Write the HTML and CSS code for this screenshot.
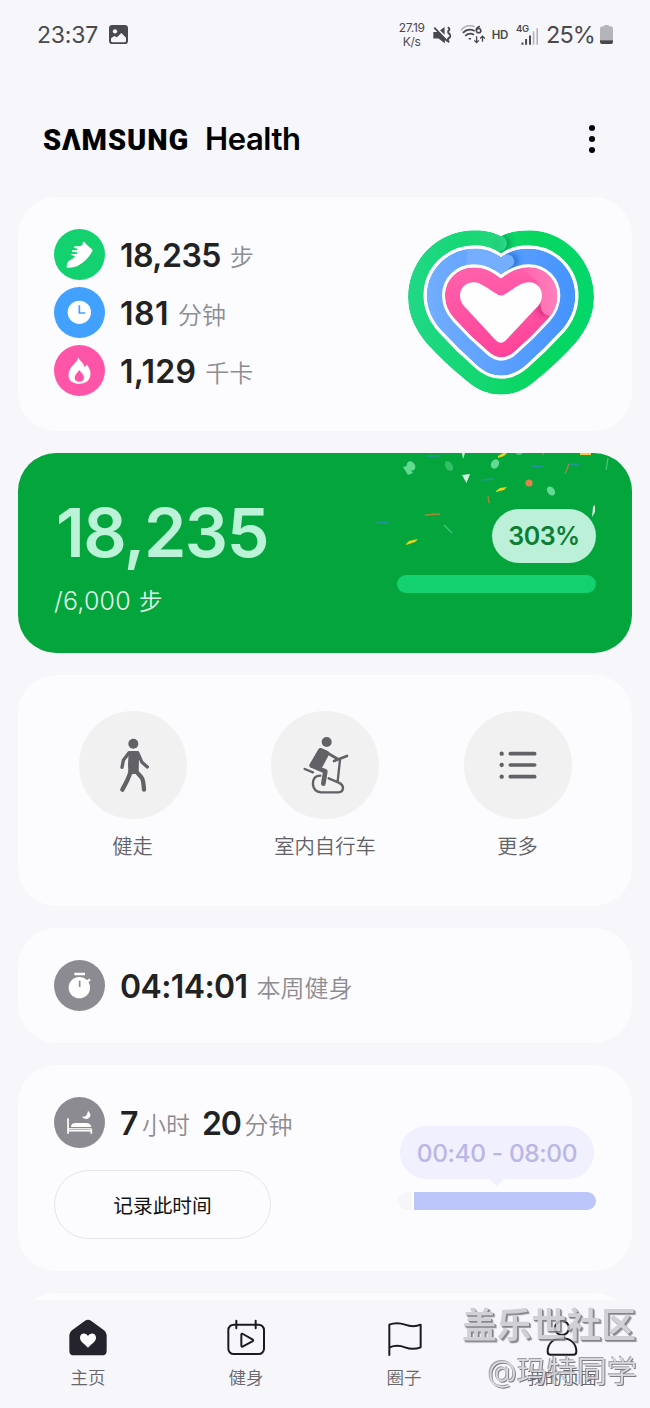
FILE: index.html
```html
<!DOCTYPE html>
<html lang="zh-CN">
<head>
<meta charset="utf-8">
<title>Samsung Health</title>
<link rel="stylesheet" href="styles.css">
</head>
<body>
<div class="screen">
  <header class="status">
    <div class="status-left">
      <span class="clock">23:37</span>
      <svg class="photo" viewBox="0 0 57 57"><rect width="57" height="57" rx="10" fill="#4a4a4e"/><circle cx="18" cy="19" r="6.500" fill="#f6f6fb"/><path d="M6 40l10-7 8 4 13-13 14 14v9q0 5-5 5H11q-5 0-5-5z" fill="#f6f6fb"/></svg>
    </div>
    <div class="status-right">
      <span class="speed">27.19<br>K/s</span>
      <svg class="mute" viewBox="0 0 56 54" fill="#48484c"><path d="M1 18h14l22 22v13L17 38H1zM22 12l14-10v24zM6 2l41 43-4 4L2 6z"/><path d="M46 3q8 5 3 10t2 11-1 12 0 14" fill="none" stroke="#48484c" stroke-width="6"/></svg>
      <svg class="wifi" viewBox="0 0 78 58" fill="none" stroke="#48484c" stroke-width="5"><path d="M2 16Q20-5 44 5" stroke="#b5b5b9"/><path d="M8 24q16-16 36-6M15 33q14-12 27-3M26 42h7"/><path d="M50 34v19m-7-6 7 7 7-7M68 51V34m-7 7 7-7 7 7" stroke-width="4"/><path d="M60 4q-12 4-11 13c2 10 15 8 14 0-1-7-9-9-14-1" stroke-width="5"/></svg>
      <span class="hd">HD</span>
      <div class="cell"><span class="net">4G</span><svg viewBox="0 0 54 52"><path d="M4 51v-7M15 51V34M27 51V23" stroke="#48484c" stroke-width="6"/><path d="M38 51V10M49 51V1" stroke="#b5b5b9" stroke-width="5"/></svg></div>
      <span class="percent">25%</span>
      <svg class="battery" viewBox="0 0 39 57"><path d="M13 0h13v4h5q8 0 8 8v34H0V12q0-8 8-8h5z" fill="#b5b5b9"/><path d="M0 46h39v5q0 6-6 6H6q-6 0-6-6z" fill="#48484c"/></svg>
    </div>
  </header>

  <div class="appbar">
    <h1 class="brand"><span class="maker" aria-label="SAMSUNG">SΛMSUNG</span><span class="product">Health</span></h1>
    <button class="menu" aria-label="更多选项"><i></i><i></i><i></i></button>
  </div>

  <main class="cards">
    <section class="card daily">
      <div class="metrics">
        <div class="row">
          <svg class="badge" viewBox="0 0 153 153"><circle cx="76.500" cy="76.500" r="76.500" fill="#12d16e"/><path d="M87 39q2-2 4 0l8 9 15 13q3 3 1 6-8 14-19 25-12 12-27 20-14 5-28 4-4 0-3-4 0-10 6-16l14-8q4-4 5-8l-10-1q-2-3 1-4h14l3-5-16-1q-3-3 0-5h14l2-5-10-2q-2-3 1-5h13q9 0 11-6z" fill="#fff"/></svg>
          <b class="value">18,235</b><span class="unit">步</span>
        </div>
        <div class="row">
          <svg class="badge" viewBox="0 0 153 153"><circle cx="76.500" cy="76.500" r="76.500" fill="#42a1ff"/><circle cx="76" cy="76" r="35" fill="#fff"/><path d="M76 55v23h18" fill="none" stroke="#42a1ff" stroke-width="5"/></svg>
          <b class="value minutes">181</b><span class="unit">分钟</span>
        </div>
        <div class="row">
          <svg class="badge" viewBox="0 0 153 153"><circle cx="76.500" cy="76.500" r="76.500" fill="#ff55a8"/><path d="M73 38c4 9 15 13 18 27 5-1 5-4 7-6 20 20 15 57-22 57-36 0-39-31-23-51 8-9 16-17 20-27z" fill="#fff"/><path d="M76 75c8 10 14 15 14 24 0 7-6 11-14 11s-14-4-14-11c0-9 7-14 14-24z" fill="#ff55a8"/></svg>
          <b class="value kcal">1,129</b><span class="unit">千卡</span>
        </div>
      </div>
      <svg class="heart" viewBox="39 44 558 494">
        <defs>
          <linearGradient id="green"><stop offset="0" stop-color="#21d886"/><stop offset=".7" stop-color="#08d65f"/><stop offset="1" stop-color="#04d66b"/></linearGradient>
          <linearGradient id="blue"><stop offset="0" stop-color="#72adff"/><stop offset="1" stop-color="#4593ff"/></linearGradient>
          <linearGradient id="pink" x1="0" y1="0" x2=".2" y2="1"><stop offset="0" stop-color="#ff62ad"/><stop offset="1" stop-color="#ff459b"/></linearGradient>
          <linearGradient id="pinktip" x1="0" x2="1"><stop offset="0" stop-color="#ff62ad"/><stop offset="1" stop-color="#ff80bc"/></linearGradient>
          <linearGradient id="greentip" x1="0" x2="1"><stop offset="0" stop-color="#2bd986" stop-opacity="0"/><stop offset="1" stop-color="#2bd986"/></linearGradient>
          <filter id="shade" x="-60%" y="-60%" width="220%" height="220%"><feGaussianBlur stdDeviation="9"/></filter>
          <clipPath id="g"><path id="gp" d="M318 62C292 48 266 44 240 44C125 44 39 135 39 245C39 299 62 343 92 380Q145 440 216 497C279 551 358 551 420 497Q491 440 544 380C574 343 597 299 597 245C597 135 510 44 400 44C370 44 342 49 318 62Z"/></clipPath>
          <clipPath id="b"><path id="bp" d="M318 125C293 107 267 99 240 99C158 99 95 163 95 240C95 281 112 314 137 343Q190 401 245 449C291 491 346 491 393 449Q448 401 501 343C526 314 541 281 541 240C541 163 479 99 399 99C368 99 342 107 318 125Z"/></clipPath>
          <clipPath id="p"><path id="pp" d="M318 188C289 166 267 155 236 155C188 155 150 193 150 240C150 267 160 289 180 311Q226 362 276 405C305 433 334 433 363 405Q412 362 458 311C478 289 487 267 487 240C487 193 450 155 401 155C370 155 347 166 318 188Z"/></clipPath>
        </defs>
        <g clip-path="url(#g)"><use href="#gp" fill="url(#green)"/><circle cx="320" cy="84" r="25" fill="#007d42" opacity=".65" filter="url(#shade)"/><path d="M200 40Q275 42 318 61A23 23 0 0 1 306 107Q270 90 200 91Z" fill="url(#greentip)"/></g>
        <use href="#bp" fill="#fff" stroke="#fff" stroke-width="19"/>
        <g clip-path="url(#b)"><use href="#bp" fill="url(#blue)"/><circle cx="347" cy="136" r="24" fill="#175bbb" opacity=".65" filter="url(#shade)"/><path d="M215 99Q275 93 319 126L326 119Q353 112 358 135Q358 150 344 157L318 180L290 155L215 145Z" fill="#75aeff"/></g>
        <use href="#pp" fill="#fff" stroke="#fff" stroke-width="18"/>
        <g clip-path="url(#p)"><use href="#pp" fill="url(#pink)"/><circle cx="449" cy="278" r="24" fill="#bd1c67" opacity=".6" filter="url(#shade)"/><path d="M370 150H490V270A25 25 0 0 1 438 278L430 200Z" fill="url(#pinktip)"/></g>
        <path d="M318 240C326 240 331 235 370 210C382 203 392 200 403 200C425 200 441 218 441 239C441 255 434 267 424 277L337 370C323 386 312 386 298 370L212 277C202 266 195 255 195 239C195 217 213 200 236 200C248 200 260 206 270 213C307 236 310 240 318 240Z" fill="#fefeff"/>
      </svg>
    </section>

    <section class="card steps">
      <svg class="confetti" viewBox="0 0 280 100">
        <g fill="#62da91"><ellipse cx="41" cy="13" rx="4" ry="5" transform="rotate(-35 41 13)"/><path d="M33 14l4-1 6 7-5 2z"/><ellipse cx="79" cy="13" rx="3.500" ry="5.500" transform="rotate(-30 79 13)" opacity=".5"/><ellipse cx="125" cy="11" rx="3.800" ry="5" transform="rotate(35 125 11)"/><ellipse cx="181" cy="38" rx="3.600" ry="5" transform="rotate(-35 181 38)"/><path d="M145 0h8q-4 4-8 0z" opacity=".7"/></g>
        <path d="M92 22l8-1-3.500 9zM92 0h3l-2 6zM223 54l2-2v7l-3 5z" fill="#d5f3df"/>
        <g fill="#e9d31d"><path d="M128 3l5-3h4l-3 3-6 2zM126 38l4-3 7-1-3 3-8 2zM36 91l3-3 9-2-3 3-9 3z"/><path d="M210 0h11v2h-11z" fill="#fbcb30"/></g>
        <circle cx="159" cy="30" r="3.600" fill="#e4824b"/>
        <g fill="none" stroke="#2295a0" stroke-width="1.300"><path d="M57 3h13M112 27l12-1M161 13l12 1M197 11l12 1M6 69l13 1"/><path d="M118 43l1 7M199 11l-4 10M55 62l15-1M173 0v2" stroke="#a58a35"/><path d="M74 72l8 8M238 5l-2 12" stroke="#4bc47a"/></g>
      </svg>
      <div class="steps-left"><strong class="big">18,235</strong><span class="goal">/6,000 <i>步</i></span></div>
      <div class="steps-right"><span class="pill">303%</span><div class="bar"></div></div>
    </section>

    <section class="card shortcuts">
      <div class="shortcut"><div class="round"><svg viewBox="0 0 324 324" fill="none" stroke="#626166" stroke-linecap="round" stroke-linejoin="round"><circle cx="163" cy="98" r="15" fill="#626166" stroke="none"/><path d="M155 126h16l3 20-1 36-19 2-1-25z" fill="#626166" stroke-width="12"/><path d="M150 125l-17 23-4 21M176 125l13 29 16 14" stroke-width="10"/><path d="M154 184q-5 18-24 52M174 184l14 16q5 5 7 36" stroke-width="13"/></svg></div><span>健走</span></div>
      <div class="shortcut"><div class="round"><svg viewBox="0 0 324 324" fill="none" stroke="#626166" stroke-linecap="round" stroke-linejoin="round"><circle cx="167" cy="93" r="15" fill="#626166" stroke="none"/><path d="M149 119l18 8-18 34-26 2z" fill="#626166" stroke-width="16"/><path d="M159 120l41 24M189 150l39-15" stroke-width="8"/><path d="M123 164l40 17-6 37" stroke-width="14"/><path d="M101 174l25 10M207 146l-7 65M148 194q-24 0-22 27 2 21 24 23h52q14-1 14-14-1-10-13-15l-30-13" stroke-width="7"/></svg></div><span>室内自行车</span></div>
      <div class="shortcut"><div class="round"><svg viewBox="0 0 324 324" stroke="#626166" stroke-width="11" stroke-linecap="round"><path d="M139 128h73M139 162h73M139 197h73"/><path d="M113 128h.1M113 162h.1M113 197h.1" stroke-width="13"/></svg></div><span>更多</span></div>
    </section>

    <section class="card workout">
      <div class="row">
        <svg class="badge" viewBox="0 0 153 153"><circle cx="76.500" cy="76.500" r="76.500" fill="#8c8b91"/><circle cx="76" cy="83" r="32" fill="#fff"/><path d="M61 42h32M98 66l10-8" stroke="#fff" stroke-width="7"/><path d="M77 62v19" stroke="#8c8b91" stroke-width="5"/></svg>
        <b class="value duration">04:14:01</b><span class="unit">本周健身</span>
      </div>
    </section>

    <section class="card sleep">
      <div class="sleep-left">
        <div class="row">
          <svg class="badge" viewBox="0 0 153 153"><circle cx="76.500" cy="76.500" r="76.500" fill="#8c8b91"/><path d="M42 64v46M42 101h70M112 95v15" fill="none" stroke="#fff" stroke-width="5"/><path d="M42 95h70" stroke="#fff" stroke-width="3"/><path d="M51 90q0-12 14-12h31q14 0 16 12z" fill="#fff"/><path d="M102 41q13 13 3 22-10 8-22-4 17 3 19-18z" fill="#fff"/></svg>
          <b class="value">7</b><span class="unit near">小时</span><b class="value second">20</b><span class="unit near">分钟</span>
        </div>
        <button class="record">记录此时间</button>
      </div>
      <div class="sleep-right"><span class="bubble">00:40 - 08:00</span><div class="track"><i></i></div></div>
    </section>
    <section class="card next"></section>
  </main>

  <nav class="tabs">
    <div class="tab"><svg viewBox="0 0 114 114"><path d="M47 6q10-8 20 0l38 28q8 6 8 14v47q0 14-14 14H15Q1 109 1 95V48q0-8 8-14z" fill="#25232b"/><path d="M57 86C48 75 33 68 33 56c0-15 18-17 24-5 6-12 24-10 24 5 0 12-15 19-24 30z" fill="#fff"/></svg><span>主页</span></div>
    <div class="tab"><svg viewBox="0 0 114 114" fill="none" stroke="#1b1a20" stroke-width="6" stroke-linejoin="round" stroke-linecap="round"><rect x="4" y="17" width="107" height="88" rx="16"/><path d="M28 5v23M86 5v23M43 47q0-5 5-2l28 16q5 3 0 6L48 82q-5 3-5-3z"/></svg><span>健身</span></div>
    <div class="tab"><svg viewBox="0 0 114 114" fill="none" stroke="#1b1a20" stroke-width="6" stroke-linejoin="round" stroke-linecap="round"><path d="M13 108V17q22-9 47 0t47 0v68q-23 9-47 0t-46 0"/></svg><span>圈子</span></div>
    <div class="tab"><svg viewBox="0 0 114 114" fill="none" stroke="#1b1a20" stroke-width="6"><circle cx="57" cy="27" r="21"/><path d="M14 98c0-25 17-40 43-40s43 15 43 40q0 9-9 9H23q-9 0-9-9z"/></svg><span>我的页面</span></div>
  </nav>
  <div class="watermark"><span class="community">盖乐世社区</span><span class="author">@玛特同学</span></div>
</div>
</body>
</html>
```
FILE: styles.css
```css
* { box-sizing: border-box; }
body { margin: 0; background: #f6f6fb; font-family: Inter, "Noto Sans CJK SC", sans-serif; }
i { font-style: normal; }
svg { display: block; flex: none; }
button { padding: 0; border: 0; background: none; font: inherit; }

.screen { position: relative; display: flex; flex-direction: column; width: 650px; height: 1408px; overflow: hidden; }

.status { display: flex; flex: none; justify-content: space-between; height: 69px; padding: 0 37px; color: #4a4a4e; }
.status-left, .status-right { display: flex; align-items: center; }
.clock { font-size: 23px; letter-spacing: -.2px; }
.photo { width: 19px; height: 19px; margin-left: 11px; }
.speed { width: 30px; margin-right: 6px; font-size: 12px; line-height: 14px; letter-spacing: -.3px; text-align: center; }
.mute { width: 18px; height: 18px; }
.wifi { width: 26px; height: 19px; margin-left: 9px; }
.hd { margin-left: 6px; font-size: 11.500px; font-weight: 600; letter-spacing: -.3px; }
.cell { position: relative; width: 23px; height: 20px; margin-left: 8px; padding: 3px 0 0 5px; }
.cell svg { width: 18px; height: 17px; }
.net { position: absolute; left: 0; top: -2px; font-size: 9.500px; font-weight: 600; line-height: 12px; letter-spacing: -.4px; }
.percent { margin-left: 7px; font-size: 23.500px; letter-spacing: -.9px; }
.battery { width: 13px; height: 19px; margin-left: 5px; }

.appbar { display: flex; flex: none; align-items: center; justify-content: space-between; height: 128px; padding: 12px 55px 0 43px; }
.brand { display: flex; align-items: baseline; gap: 17px; margin: 0; color: #000; line-height: 34px; }
.maker { width: 145px; font: 900 29px/34px Roboto, sans-serif; letter-spacing: .9px; white-space: nowrap; }
.product { font-size: 31px; font-weight: 600; letter-spacing: -.4px; }
.menu { display: flex; flex-direction: column; gap: 5px; width: 6px; }
.menu i { width: 6px; height: 6px; border-radius: 50%; background: #000; }

.cards { display: flex; flex: none; flex-direction: column; gap: 22px; height: 1103px; padding: 0 18px; overflow: hidden; }
.card { flex: none; border-radius: 38px; background: #fcfcff; }
.row { display: flex; align-items: center; height: 51px; }
.badge { width: 51px; height: 51px; margin-right: 15px; }
.value { margin-top: 3px; color: #222; font-size: 32px; font-weight: 600; line-height: 48px; letter-spacing: -.5px; }
.minutes { letter-spacing: .5px; }
.kcal { letter-spacing: .3px; }
.duration { letter-spacing: -.6px; }
.unit { margin: 6px 0 0 9px; color: #8d8c91; font-size: 24px; font-weight: 350; line-height: 45px; }
.near { margin-left: 4px; }
.second { margin-left: 12px; letter-spacing: -1.200px; }

.daily { display: flex; justify-content: space-between; height: 234px; padding: 32px 38px 0 36px; }
.metrics { display: flex; flex-direction: column; gap: 7px; }
.heart { width: 186px; height: 165px; margin-top: 1px; }

.steps { position: relative; display: flex; justify-content: space-between; height: 200px; padding: 44px 36px 0; overflow: hidden; background: #05a53e; }
.confetti { position: absolute; left: 352px; top: 0; width: 280px; height: 100px; }
.steps-left { display: flex; flex-direction: column; }
.big { padding-left: 2px; color: #bcf2d8; font-size: 68px; font-weight: 600; line-height: 70px; letter-spacing: -1.500px; }
.goal { margin-top: 16px; color: #dff8e9; font-size: 25px; font-weight: 350; line-height: 36px; letter-spacing: .2px; }
.goal i { margin-left: 1px; font-size: 23.500px; }
.steps-right { position: relative; display: flex; flex-direction: column; align-items: flex-end; width: 199px; padding-top: 12px; }
.pill { width: 104px; height: 54px; border-radius: 27px; background: #bdf0d8; color: #0a7e36; font-size: 25px; font-weight: 600; line-height: 55px; text-align: center; letter-spacing: -.5px; }
.bar { width: 199px; height: 18px; margin-top: 12px; border-radius: 9px; background: #12d16e; }

.shortcuts { display: flex; justify-content: center; height: 231px; padding-top: 36px; }
.shortcut { display: flex; flex-direction: column; align-items: center; width: 192.500px; color: #626166; font-size: 20.300px; font-weight: 350; line-height: 30px; }
.round { width: 108px; height: 108px; margin-bottom: 13px; border-radius: 50%; background: #f1f1f2; }

.workout { height: 115px; padding: 32px 36px; }
.sleep { display: flex; justify-content: space-between; height: 206px; padding: 32px 36px 0; }
.record { display: block; width: 217px; height: 69px; margin-top: 22px; padding-top: 3px; border: 1px solid #e5e5e8; border-radius: 35px; color: #111; font-size: 19.700px; line-height: 64px; }
.sleep-right { display: flex; flex-direction: column; width: 198px; padding-top: 29px; }
.bubble { position: relative; width: 194px; height: 53px; margin-left: 2px; border-radius: 27px; background: #f0f0fe; color: #bbb6e5; font-size: 24.500px; font-weight: 550; line-height: 54px; text-align: center; white-space: nowrap; letter-spacing: -.4px; }
.bubble::after { content: ""; position: absolute; left: 91px; top: 47px; width: 11px; height: 11px; border-radius: 2px; background: #f0f0fe; transform: rotate(45deg); }
.track { height: 18px; margin-top: 13px; padding-left: 14px; border-radius: 9px; background: #f6f6f9; overflow: hidden; }
.track i { display: block; height: 18px; border-left: 2px solid #fff; background: #bdc6f8; }
.next { height: 100px; }

.tabs { display: flex; flex: none; height: 108px; padding: 18px 9px 0; background: #f6f6fb; }
.tab { display: flex; flex-direction: column; align-items: center; width: 158px; color: #68676c; font-size: 17.500px; font-weight: 350; line-height: 24px; }
.tab svg { width: 38px; height: 38px; margin: 1px 0 9px; }

.watermark { position: absolute; right: 13px; bottom: 16px; display: flex; flex-direction: column; align-items: flex-end; color: #cbcace; }
.community { margin-right: 1px; font-size: 34.800px; font-weight: 700; line-height: 45px; text-shadow: 1px 1px 0 #717076, 2px 2px 1px #85848a; opacity: .85; transform: translateY(-2px); }
.author { font-size: 30px; font-weight: 350; line-height: 42px; color: #d5d4d8; text-shadow: 1px 1px 0 #6b6a70, -1px -1px 0 #929197; opacity: .85; }
```
